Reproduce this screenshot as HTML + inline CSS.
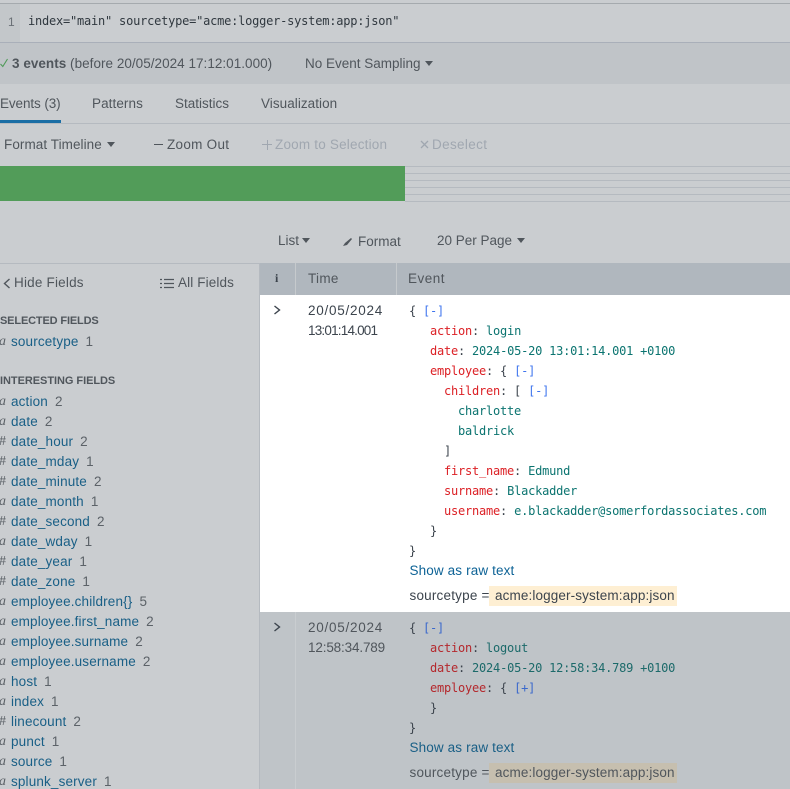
<!DOCTYPE html>
<html><head><meta charset="utf-8"><style>
html,body{margin:0;padding:0;height:789px;overflow:hidden}
body{width:790px;position:relative;background:#cacdd0;font-family:"Liberation Sans",sans-serif;font-size:13.5px;color:#50565c}
div{position:absolute}
.t{white-space:pre;line-height:20px;height:20px;letter-spacing:.15px}
.m{font-family:"DejaVu Sans Mono",monospace;font-size:12px;letter-spacing:-.22px;white-space:pre;line-height:20px;height:20px;color:#3c444d}
.k{color:#dc2025}.v{color:#0b7470}.b{color:#3f75ee}
.r2 .k{color:#b4282d}.r2 .v{color:#1c6a6a}.r2 .b{color:#3a68cc}
.f{color:#195f86;letter-spacing:.15px}.f i{font-style:normal;color:#5c6268;letter-spacing:0;margin-left:7px}
.a{font-family:"Liberation Serif",serif;font-style:italic;color:#5c6268;left:-1px;font-size:14px}
.d{color:#a0a7b0}
.tri{width:0;height:0;border-left:4px solid transparent;border-right:4px solid transparent;border-top:5px solid #50565c}
.l{color:#0e6396;letter-spacing:.13px}
</style></head><body>
<div style="left:0;top:3px;width:790px;height:1px;background:#a5aaae"></div>
<div style="left:0;top:4px;width:20px;height:38px;background:#c3c7ca"></div>
<div class="t" style="left:8px;top:12px;color:#6a7076;font-size:12px">1</div>
<div class="m" style="left:28px;top:11px;color:#30383f">index="main" sourcetype="acme:logger-system:app:json"</div>
<div style="left:0;top:42px;width:790px;height:1px;background:#a9afb9"></div>
<div style="left:0;top:43px;width:790px;height:41px;background:#c0c4c8"></div>
<svg style="position:absolute;left:0;top:58px" width="10" height="10"><path d="M0.5 6 L2.8 8.5 L7.5 1" fill="none" stroke="#4f9a58" stroke-width="1.1"/></svg>
<div class="t" style="left:12px;top:54px;letter-spacing:.03px"><b>3 events</b> (before 20/05/2024 17:12:01.000)</div>
<div class="t" style="left:305px;top:54px;letter-spacing:0">No Event Sampling</div>
<div class="tri" style="left:425px;top:61px"></div>
<div class="t" style="left:0;top:94px;letter-spacing:-.1px">Events (3)</div>
<div class="t" style="left:92px;top:94px;letter-spacing:.08px">Patterns</div>
<div class="t" style="left:175px;top:94px;letter-spacing:0">Statistics</div>
<div class="t" style="left:261px;top:94px;letter-spacing:.05px">Visualization</div>
<div style="left:0;top:123px;width:790px;height:1px;background:#b5bac0"></div>
<div style="left:0;top:120px;width:61px;height:3px;background:#1a6ea5"></div>
<div class="t" style="left:4px;top:135px;letter-spacing:.07px">Format Timeline</div>
<div class="tri" style="left:107px;top:142px"></div>
<div style="left:154px;top:144px;width:9px;height:1px;background:#50565c"></div>
<div class="t" style="left:167px;top:135px;letter-spacing:.28px">Zoom Out</div>
<div style="left:262px;top:144px;width:10px;height:1px;background:#a0a7b0"></div>
<div style="left:266.5px;top:140px;width:1px;height:10px;background:#a0a7b0"></div>
<div class="t d" style="left:275px;top:135px;letter-spacing:.2px">Zoom to Selection</div>
<svg style="position:absolute;left:420px;top:140px" width="10" height="10"><path d="M1 1 L8 8 M8 1 L1 8" stroke="#a0a7b0" stroke-width="1.3" fill="none"/></svg>
<div class="t d" style="left:432px;top:135px;letter-spacing:.35px">Deselect</div>
<div style="left:0;top:166px;width:405px;height:35px;background:#529c59"></div>
<div style="left:405px;top:166px;width:385px;height:1px;background:#b5bac0"></div>
<div style="left:405px;top:173px;width:385px;height:1px;background:#b5bac0"></div>
<div style="left:405px;top:180px;width:385px;height:1px;background:#b5bac0"></div>
<div style="left:405px;top:187px;width:385px;height:1px;background:#b5bac0"></div>
<div style="left:405px;top:194px;width:385px;height:1px;background:#b5bac0"></div>
<div style="left:405px;top:201px;width:385px;height:1px;background:#b5bac0"></div>
<div class="t" style="left:278px;top:231px;letter-spacing:0">List</div>
<div class="tri" style="left:302px;top:238px"></div>
<svg style="position:absolute;left:342px;top:236px" width="12" height="12"><path d="M1 10 L3 7 L9 2 L10 3 L5 9 Z" fill="#50565c"/></svg>
<div class="t" style="left:358px;top:232px;letter-spacing:0">Format</div>
<div class="t" style="left:437px;top:231px;letter-spacing:0">20 Per Page</div>
<div class="tri" style="left:517px;top:238px"></div>
<div style="left:0;top:263px;width:260px;height:1px;background:#b5bac0"></div>
<div style="left:259px;top:263px;width:1px;height:526px;background:#b5bac0"></div>
<svg style="position:absolute;left:3px;top:278px" width="8" height="12"><path d="M6.5 1 L1.5 5.5 L6.5 10" fill="none" stroke="#50565c" stroke-width="1.4"/></svg>
<div class="t" style="left:14px;top:273px;letter-spacing:.2px">Hide Fields</div>
<svg style="position:absolute;left:160px;top:278px" width="14" height="11"><path d="M0 1.5h2M4 1.5h10M0 5.5h2M4 5.5h10M0 9.5h2M4 9.5h10" fill="none" stroke="#50565c" stroke-width="1.3"/></svg>
<div class="t" style="left:178px;top:273px;letter-spacing:.12px">All Fields</div>
<div class="t" style="left:0;top:311px;font-size:11px;font-weight:bold;letter-spacing:-.15px">SELECTED FIELDS</div>
<div class="t" style="left:0;top:371px;font-size:11px;font-weight:bold;letter-spacing:-.05px">INTERESTING FIELDS</div>
<div class="t a" style="top:332px">a</div><div class="t f" style="left:11px;top:332px">sourcetype<i>1</i></div>
<div class="t a" style="top:392px">a</div><div class="t f" style="left:11px;top:392px">action<i>2</i></div>
<div class="t a" style="top:412px">a</div><div class="t f" style="left:11px;top:412px">date<i>2</i></div>
<div class="t a" style="top:432px;font-style:normal">#</div><div class="t f" style="left:11px;top:432px">date_hour<i>2</i></div>
<div class="t a" style="top:452px;font-style:normal">#</div><div class="t f" style="left:11px;top:452px">date_mday<i>1</i></div>
<div class="t a" style="top:472px;font-style:normal">#</div><div class="t f" style="left:11px;top:472px">date_minute<i>2</i></div>
<div class="t a" style="top:492px">a</div><div class="t f" style="left:11px;top:492px">date_month<i>1</i></div>
<div class="t a" style="top:512px;font-style:normal">#</div><div class="t f" style="left:11px;top:512px">date_second<i>2</i></div>
<div class="t a" style="top:532px">a</div><div class="t f" style="left:11px;top:532px">date_wday<i>1</i></div>
<div class="t a" style="top:552px;font-style:normal">#</div><div class="t f" style="left:11px;top:552px">date_year<i>1</i></div>
<div class="t a" style="top:572px;font-style:normal">#</div><div class="t f" style="left:11px;top:572px">date_zone<i>1</i></div>
<div class="t a" style="top:592px">a</div><div class="t f" style="left:11px;top:592px">employee.children{}<i>5</i></div>
<div class="t a" style="top:612px">a</div><div class="t f" style="left:11px;top:612px">employee.first_name<i>2</i></div>
<div class="t a" style="top:632px">a</div><div class="t f" style="left:11px;top:632px">employee.surname<i>2</i></div>
<div class="t a" style="top:652px">a</div><div class="t f" style="left:11px;top:652px">employee.username<i>2</i></div>
<div class="t a" style="top:672px">a</div><div class="t f" style="left:11px;top:672px">host<i>1</i></div>
<div class="t a" style="top:692px">a</div><div class="t f" style="left:11px;top:692px">index<i>1</i></div>
<div class="t a" style="top:712px;font-style:normal">#</div><div class="t f" style="left:11px;top:712px">linecount<i>2</i></div>
<div class="t a" style="top:732px">a</div><div class="t f" style="left:11px;top:732px">punct<i>1</i></div>
<div class="t a" style="top:752px">a</div><div class="t f" style="left:11px;top:752px">source<i>1</i></div>
<div class="t a" style="top:772px">a</div><div class="t f" style="left:11px;top:772px">splunk_server<i>1</i></div>

<div style="left:260px;top:263px;width:530px;height:32px;background:#b0b7be"></div>
<div style="left:295px;top:263px;width:1px;height:32px;background:#c6cacd"></div>
<div style="left:396px;top:263px;width:1px;height:32px;background:#c6cacd"></div>
<div class="t" style="left:275px;top:268px;font-family:'Liberation Serif',serif;font-weight:bold;font-size:12px;color:#3c444d">i</div>
<div class="t" style="left:308px;top:269px;letter-spacing:.3px">Time</div>
<div class="t" style="left:408px;top:269px;letter-spacing:.5px">Event</div>

<div style="left:260px;top:295px;width:530px;height:317px;background:#fff"></div>
<svg style="position:absolute;left:273px;top:305px" width="10" height="11"><path d="M1.5 1 L6.5 5 L1.5 9" fill="none" stroke="#3c444d" stroke-width="1.4"/></svg>
<div class="t" style="left:308px;top:301px;color:#3c444d;letter-spacing:.75px">20/05/2024</div>
<div class="t" style="left:308px;top:321px;color:#3c444d;letter-spacing:-.8px">13:01:14.001</div>
<div class="m" style="left:409px;top:301px">{ <span class="b">[-]</span></div>
<div class="m" style="left:430px;top:321px"><span class="k">action</span>: <span class="v">login</span></div>
<div class="m" style="left:430px;top:341px"><span class="k">date</span>: <span class="v">2024-05-20 13:01:14.001 +0100</span></div>
<div class="m" style="left:430px;top:361px"><span class="k">employee</span>: { <span class="b">[-]</span></div>
<div class="m" style="left:444px;top:381px"><span class="k">children</span>: [ <span class="b">[-]</span></div>
<div class="m" style="left:458px;top:401px"><span class="v">charlotte</span></div>
<div class="m" style="left:458px;top:421px"><span class="v">baldrick</span></div>
<div class="m" style="left:444px;top:441px">]</div>
<div class="m" style="left:444px;top:461px"><span class="k">first_name</span>: <span class="v">Edmund</span></div>
<div class="m" style="left:444px;top:481px"><span class="k">surname</span>: <span class="v">Blackadder</span></div>
<div class="m" style="left:444px;top:501px"><span class="k">username</span>: <span class="v">e.blackadder@somerfordassociates.com</span></div>
<div class="m" style="left:430px;top:521px">}</div>
<div class="m" style="left:409px;top:541px">}</div>
<div class="t l" style="left:409.5px;top:561px">Show as raw text</div>
<div class="t" style="left:409.5px;top:586px;color:#3c444d;letter-spacing:.2px">sourcetype =</div>
<div style="left:489px;top:586px;width:188px;height:20px;background:#feefd3"></div>
<div class="t" style="left:495px;top:586px;color:#3c444d;letter-spacing:.12px">acme:logger-system:app:json</div>

<div style="left:260px;top:612px;width:530px;height:177px;background:#bfc4c8"></div>
<div style="left:295px;top:612px;width:1px;height:177px;background:#c9cdd0"></div>
<svg style="position:absolute;left:273px;top:622px" width="10" height="11"><path d="M1.5 1 L6.5 5 L1.5 9" fill="none" stroke="#3c444d" stroke-width="1.4"/></svg>
<div class="t" style="left:308px;top:618px;letter-spacing:.75px">20/05/2024</div>
<div class="t" style="left:308px;top:638px;letter-spacing:-.15px">12:58:34.789</div>
<div class="r2">
<div class="m" style="left:409px;top:618px">{ <span class="b">[-]</span></div>
<div class="m" style="left:430px;top:638px"><span class="k">action</span>: <span class="v">logout</span></div>
<div class="m" style="left:430px;top:658px"><span class="k">date</span>: <span class="v">2024-05-20 12:58:34.789 +0100</span></div>
<div class="m" style="left:430px;top:678px"><span class="k">employee</span>: { <span class="b">[+]</span></div>
<div class="m" style="left:430px;top:698px">}</div>
<div class="m" style="left:409px;top:718px">}</div>
</div>
<div class="t l" style="left:409.5px;top:738px;color:#195f86">Show as raw text</div>
<div class="t" style="left:409.5px;top:763px;letter-spacing:.2px">sourcetype =</div>
<div style="left:489px;top:763px;width:188px;height:20px;background:#c6bfaf"></div>
<div class="t" style="left:495px;top:763px;letter-spacing:.12px">acme:logger-system:app:json</div>
</body></html>
